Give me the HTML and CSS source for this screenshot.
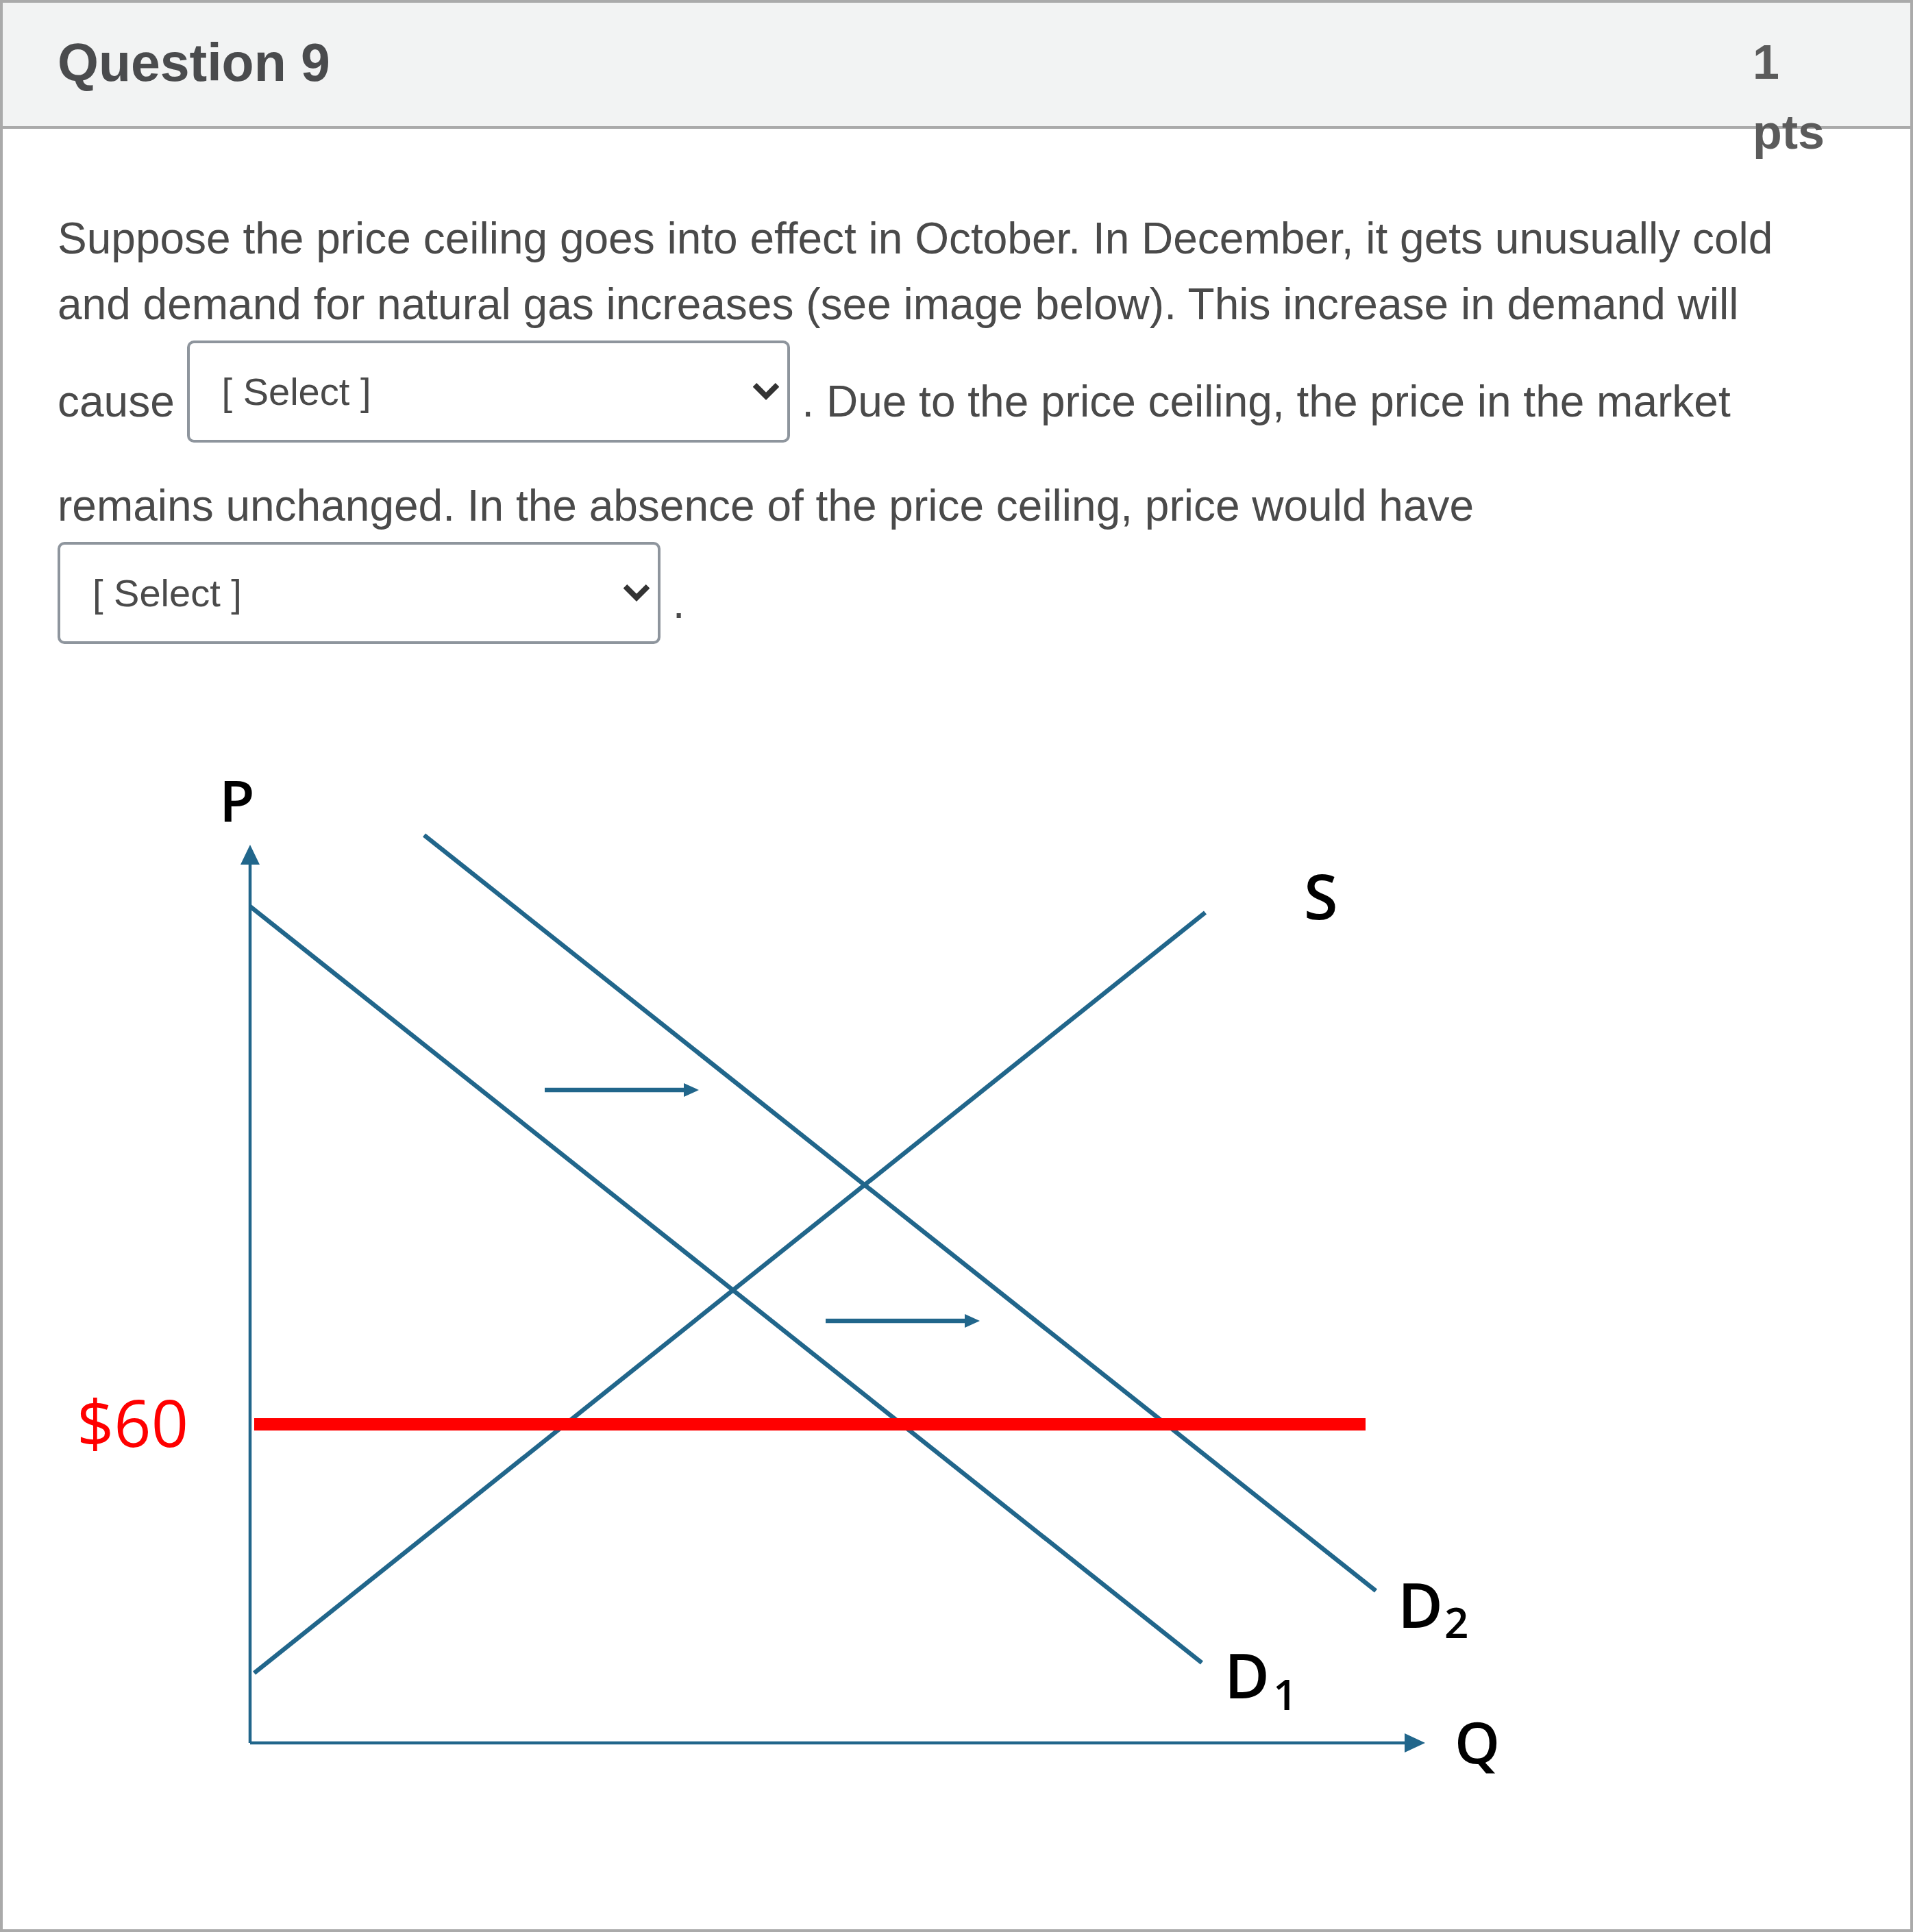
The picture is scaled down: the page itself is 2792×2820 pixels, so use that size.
FILE: index.html
```html
<!DOCTYPE html>
<html lang="en">
<head>
<meta charset="utf-8">
<title>Question 9</title>
<link rel="stylesheet" href="styles.css">
</head>
<body>
<div class="card">
  <div class="qheader">
    <h2 class="qname">Question 9</h2>
    <div class="pts">1 pts</div>
  </div>
  <div class="qbody">
    <p class="qtext">Suppose the price ceiling goes into effect in October. In December, it gets unusually cold and demand for natural gas increases (see image below). This increase in demand will cause <span class="sel" role="combobox"><span class="sel-label">[ Select ]</span><svg class="chev" viewBox="0 0 36 24"><polyline points="5,5 18,18 31,5"/></svg></span> . Due to the price ceiling, the price in the market remains unchanged. In the absence of the price ceiling, price would have <span class="sel" role="combobox"><span class="sel-label">[ Select ]</span><svg class="chev" viewBox="0 0 36 24"><polyline points="5,5 18,18 31,5"/></svg></span> .</p>
    <svg class="chart" width="2300" height="1600" viewBox="84 1100 2300 1600">
      <g class="blue">
        <line x1="365" y1="1258" x2="365" y2="2545" class="axis"/>
        <polygon points="365,1234 351,1263 379,1263"/>
        <line x1="365" y1="2545" x2="2056" y2="2545" class="axis"/>
        <polygon points="2080,2545 2050,2531 2050,2559"/>
        <line x1="365" y1="1324" x2="1754" y2="2428" class="curve"/>
        <line x1="619" y1="1220" x2="2008" y2="2323" class="curve"/>
        <line x1="371" y1="2443" x2="1759" y2="1333" class="curve"/>
        <line x1="795" y1="1592" x2="1002" y2="1592" class="curve"/>
        <polygon points="1020,1592 998,1582 998,1602"/>
        <line x1="1205" y1="1929" x2="1412" y2="1929" class="curve"/>
        <polygon points="1430,1929 1408,1919 1408,1939"/>
      </g>
      <line x1="371" y1="2080" x2="1993" y2="2080" class="ceiling"/>
      <text x="112" y="2113" class="lbl red">$60</text>
      <text x="320" y="1200" class="lbl p">P</text>
      <text x="1903" y="1343" class="lbl big">S</text>
      <text x="2123" y="2575" class="lbl p">Q</text>
      <text x="1787" y="2480" class="lbl big">D<tspan x="1858" y="2497" class="sub">1</tspan></text>
      <text x="2040" y="2377" class="lbl big">D<tspan x="2108" y="2392" class="sub">2</tspan></text>
    </svg>
  </div>
</div>
</body>
</html>
```
FILE: styles.css
```css
html, body {
  margin: 0;
  padding: 0;
  background: #ffffff;
}

body {
  font-family: "Liberation Sans", Arial, sans-serif;
}

.card {
  box-sizing: border-box;
  width: 2792px;
  height: 2820px;
  border: 4px solid #aaaaaa;
  background: #ffffff;
}

.qheader {
  box-sizing: border-box;
  height: 184px;
  display: flex;
  justify-content: space-between;
  align-items: flex-start;
  padding: 36px 110px 0 80px;
  background: #f2f3f3;
  border-bottom: 4px solid #aaaaaa;
}

.qname {
  margin: 0;
  font-size: 77px;
  font-weight: 700;
  line-height: 102px;
  color: #4a4b4d;
}

.pts {
  width: 120px;
  font-size: 70px;
  font-weight: 700;
  line-height: 102px;
  color: #5b5b5b;
}

.qbody {
  padding: 112px 140px 0 80px;
}

.qtext {
  margin: 0;
  font-size: 64px;
  line-height: 96px;
  color: #4a4a4a;
}

.sel {
  display: inline-flex;
  align-items: center;
  box-sizing: border-box;
  width: 880px;
  height: 149px;
  margin: 5px 0 44px 0;
  padding: 0 12px 0 47px;
  border: 4px solid #8e959d;
  border-radius: 10px;
  background: #ffffff;
  vertical-align: middle;
  font-size: 56px;
  line-height: 1;
  color: #4a4a4a;
}

.sel-label {
  flex: 1;
}

.chev {
  width: 38px;
  height: 26px;
  flex: none;
}

.chev polyline {
  fill: none;
  stroke: #333333;
  stroke-width: 7.5;
  stroke-linecap: square;
}

.chart {
  display: block;
  margin-top: 115px;
}

.blue line {
  stroke: #21668b;
}

.blue polygon {
  fill: #21668b;
}

.axis {
  stroke-width: 4.5;
}

.curve {
  stroke-width: 6.5;
}

.ceiling {
  stroke: #ff0000;
  stroke-width: 18;
}

.lbl {
  font-family: "Open Sans", "DejaVu Sans", sans-serif;
  font-weight: 600;
  fill: #000000;
}

.lbl.p {
  font-size: 84px;
}

.lbl.big {
  font-size: 90px;
}

.lbl .sub {
  font-size: 62px;
}

.lbl.red {
  fill: #ff0000;
  font-weight: 400;
  font-size: 95px;
}
```
